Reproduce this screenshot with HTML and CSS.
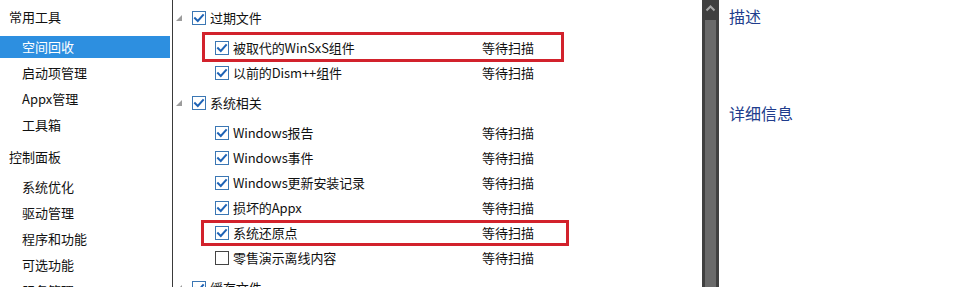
FILE: index.html
```html
<!DOCTYPE html>
<html lang="zh-CN">
<head>
<meta charset="utf-8">
<title>空间回收</title>
<link rel="stylesheet" href="styles.css">
</head>
<body>
<div class="app">
  <nav class="sidebar">
    <div class="nav-group">
      <div class="nav-title">常用工具</div>
      <div class="nav-item selected">空间回收</div>
      <div class="nav-item">启动项管理</div>
      <div class="nav-item">Appx管理</div>
      <div class="nav-item">工具箱</div>
    </div>
    <div class="nav-group">
      <div class="nav-title">控制面板</div>
      <div class="nav-item">系统优化</div>
      <div class="nav-item">驱动管理</div>
      <div class="nav-item">程序和功能</div>
      <div class="nav-item">可选功能</div>
      <div class="nav-item">服务管理</div>
    </div>
  </nav>

  <main class="tree">
    <section class="group">
      <div class="row head">
        <span class="expander"></span>
        <span class="cb on"><svg viewBox="0 0 14 14"><rect x="0.5" y="0.5" width="13" height="13"/><path d="M3 7.2 L5.8 10 L11 4.2"/></svg></span>
        <span class="label">过期文件</span>
      </div>
      <div class="row child">
        <span class="cb on"><svg viewBox="0 0 14 14"><rect x="0.5" y="0.5" width="13" height="13"/><path d="M3 7.2 L5.8 10 L11 4.2"/></svg></span>
        <span class="label">被取代的WinSxS组件</span>
        <span class="status">等待扫描</span>
      </div>
      <div class="row child">
        <span class="cb on"><svg viewBox="0 0 14 14"><rect x="0.5" y="0.5" width="13" height="13"/><path d="M3 7.2 L5.8 10 L11 4.2"/></svg></span>
        <span class="label">以前的Dism++组件</span>
        <span class="status">等待扫描</span>
      </div>
    </section>

    <section class="group">
      <div class="row head">
        <span class="expander"></span>
        <span class="cb on"><svg viewBox="0 0 14 14"><rect x="0.5" y="0.5" width="13" height="13"/><path d="M3 7.2 L5.8 10 L11 4.2"/></svg></span>
        <span class="label">系统相关</span>
      </div>
      <div class="row child">
        <span class="cb on"><svg viewBox="0 0 14 14"><rect x="0.5" y="0.5" width="13" height="13"/><path d="M3 7.2 L5.8 10 L11 4.2"/></svg></span>
        <span class="label">Windows报告</span>
        <span class="status">等待扫描</span>
      </div>
      <div class="row child">
        <span class="cb on"><svg viewBox="0 0 14 14"><rect x="0.5" y="0.5" width="13" height="13"/><path d="M3 7.2 L5.8 10 L11 4.2"/></svg></span>
        <span class="label">Windows事件</span>
        <span class="status">等待扫描</span>
      </div>
      <div class="row child">
        <span class="cb on"><svg viewBox="0 0 14 14"><rect x="0.5" y="0.5" width="13" height="13"/><path d="M3 7.2 L5.8 10 L11 4.2"/></svg></span>
        <span class="label">Windows更新安装记录</span>
        <span class="status">等待扫描</span>
      </div>
      <div class="row child">
        <span class="cb on"><svg viewBox="0 0 14 14"><rect x="0.5" y="0.5" width="13" height="13"/><path d="M3 7.2 L5.8 10 L11 4.2"/></svg></span>
        <span class="label">损坏的Appx</span>
        <span class="status">等待扫描</span>
      </div>
      <div class="row child">
        <span class="cb on"><svg viewBox="0 0 14 14"><rect x="0.5" y="0.5" width="13" height="13"/><path d="M3 7.2 L5.8 10 L11 4.2"/></svg></span>
        <span class="label">系统还原点</span>
        <span class="status">等待扫描</span>
      </div>
      <div class="row child">
        <span class="cb off"><svg viewBox="0 0 14 14"><rect x="0.5" y="0.5" width="13" height="13"/></svg></span>
        <span class="label">零售演示离线内容</span>
        <span class="status">等待扫描</span>
      </div>
    </section>

    <section class="group">
      <div class="row head">
        <span class="expander"></span>
        <span class="cb on"><svg viewBox="0 0 14 14"><rect x="0.5" y="0.5" width="13" height="13"/><path d="M3 7.2 L5.8 10 L11 4.2"/></svg></span>
        <span class="label">缓存文件</span>
      </div>
    </section>

    <div class="mark mark-1"></div>
    <div class="mark mark-2"></div>
  </main>

  <div class="scrollbar">
    <div class="scroll-up"><svg viewBox="0 0 17 20"><path d="M4.5 10.5 L8.5 6.5 L12.5 10.5"/></svg></div>
    <div class="scroll-thumb"></div>
  </div>

  <aside class="details">
    <h2 class="details-title">描述</h2>
    <h2 class="details-title info">详细信息</h2>
  </aside>
</div>
</body>
</html>
```

FILE: styles.css
```css
* { box-sizing: border-box; }

html, body {
  margin: 0;
  padding: 0;
  background: #ffffff;
}

body {
  width: 967px;
  height: 287px;
  overflow: hidden;
  font-family: "Noto Sans CJK SC", "Noto Sans", sans-serif;
  font-size: 13px;
  color: #111;
}

.app {
  display: flex;
  height: 287px;
}

/* ---------- sidebar ---------- */
.sidebar {
  width: 173px;
  flex: none;
  border-right: 1px solid #3a3a3a;
  padding-top: 6px;
  display: flex;
  flex-direction: column;
  gap: 10px;
}

.nav-group {
  display: flex;
  flex-direction: column;
  gap: 4px;
}

.nav-title {
  height: 22px;
  line-height: 22px;
  padding-left: 9px;
  margin-bottom: 4px;
}

.nav-item {
  height: 22px;
  line-height: 22px;
  padding-left: 22px;
  margin-right: 2px;
}

.nav-item.selected {
  background: #2d8fe0;
  color: #ffffff;
}

/* ---------- tree ---------- */
.tree {
  position: relative;
  width: 529px;
  flex: none;
  padding-top: 5px;
  display: flex;
  flex-direction: column;
  gap: 5px;
}

.group {
  display: flex;
  flex-direction: column;
}

.row {
  height: 25px;
  display: flex;
  align-items: center;
}

.row.head {
  margin-bottom: 5px;
  padding-left: 3px;
}

.row.child {
  padding-left: 42px;
}

.expander {
  width: 0;
  height: 0;
  border-left: 6px solid transparent;
  border-bottom: 6px solid #9c9c9c;
  margin-right: 10px;
  margin-top: 1px;
}

.cb {
  width: 14px;
  height: 14px;
  flex: none;
  display: block;
  margin-right: 4px;
}

.cb svg {
  display: block;
  width: 14px;
  height: 14px;
}

.cb rect {
  fill: #ffffff;
  stroke: #3b77b4;
  stroke-width: 1;
}

.cb path {
  fill: none;
  stroke: #1e63b6;
  stroke-width: 2;
  stroke-linecap: square;
}

.cb.off rect {
  stroke: #444;
}

.label {
  white-space: nowrap;
  letter-spacing: -0.1px;
}

.row.child .label {
  width: 249px;
}

.status {
  white-space: nowrap;
}

.mark {
  position: absolute;
  border: 3px solid #d2222c;
  pointer-events: none;
}

.mark-1 {
  left: 29px;
  top: 32px;
  width: 362px;
  height: 30px;
}

.mark-2 {
  left: 28px;
  top: 220px;
  width: 368px;
  height: 26px;
}

/* ---------- scrollbar ---------- */
.scrollbar {
  width: 17px;
  flex: none;
  background: #404040;
  display: flex;
  flex-direction: column;
}

.scroll-up {
  height: 20px;
  flex: none;
}

.scroll-up svg {
  display: block;
  width: 17px;
  height: 20px;
}

.scroll-up path {
  fill: none;
  stroke: #a8a8a8;
  stroke-width: 2;
}

.scroll-thumb {
  flex: 1;
  margin: 0 3px 0 3px;
  background: #6a6a6a;
}

/* ---------- details ---------- */
.details {
  flex: 1;
  padding-left: 10px;
  padding-top: 4px;
}

.details-title {
  margin: 0;
  font-weight: normal;
  font-size: 16px;
  line-height: 24px;
  color: #203c8c;
}

.details-title.info {
  margin-top: 73px;
}
```
